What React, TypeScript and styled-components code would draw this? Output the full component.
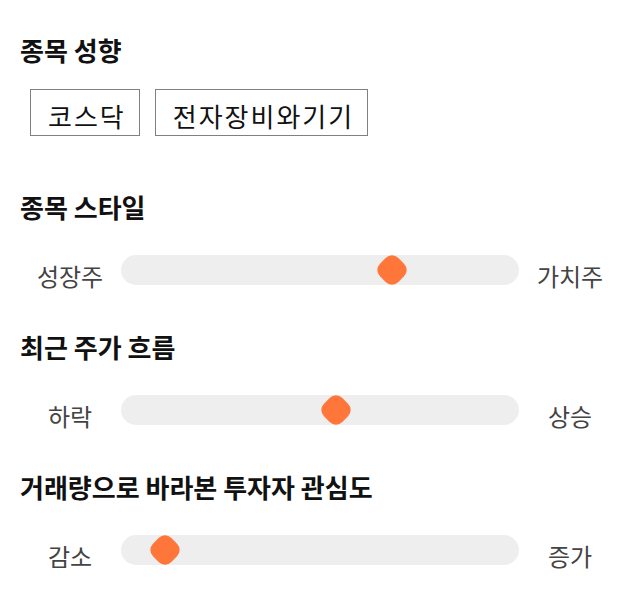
import React, { FC } from "react";
import styled, { createGlobalStyle } from "styled-components";

const GlobalStyle = createGlobalStyle`
  body {
    margin: 0;
    background: #ffffff;
    font-family: "Noto Sans CJK KR", "Noto Sans", sans-serif;
  }
`;

const Page = styled.div`
  width: 640px;
  padding: 35px 20px 0;
  box-sizing: border-box;
`;

const Heading = styled.h2`
  margin: 0;
  font-size: 26px;
  line-height: 30px;
  font-weight: 700;
  color: #111111;
`;

const ChipRow = styled.div`
  display: flex;
  gap: 15px;
  margin: 24px 0 0 10px;
`;

const Chip = styled.div`
  box-sizing: border-box;
  height: 47px;
  padding: 6px 13px 0 17px;
  display: flex;
  align-items: center;
  border: 1px solid #808080;
  font-size: 26px;
  letter-spacing: 2px;
  color: #111111;
`;

const Section = styled.section<{ $gap: number }>`
  margin-top: ${(p) => p.$gap}px;
`;

const SliderRow = styled.div`
  display: flex;
  align-items: flex-start;
  margin-top: 33px;
`;

const EndLabel = styled.span`
  width: 100px;
  flex: none;
  padding-top: 6px;
  text-align: center;
  font-size: 24px;
  line-height: 30px;
  color: #444444;
`;

const Track = styled.div`
  position: relative;
  flex: 1;
  height: 30px;
  margin: 0 1px;
  border-radius: 15px;
  background: #eeeeee;
`;

const Thumb = styled.div`
  position: absolute;
  top: 50%;
  width: 26px;
  height: 26px;
  border-radius: 9px;
  background: #ff763b;
  transform: translate(-50%, -50%) rotate(45deg);
`;

type SliderProps = {
  title: string;
  low: string;
  high: string;
  value: number;
};

const StyleSlider: FC<SliderProps> = ({ title, low, high, value }) => (
  <Section $gap={41}>
    <Heading>{title}</Heading>
    <SliderRow>
      <EndLabel>{low}</EndLabel>
      <Track>
        <Thumb style={{ left: `${value}%` }} />
      </Track>
      <EndLabel>{high}</EndLabel>
    </SliderRow>
  </Section>
);

const sliders: SliderProps[] = [
  { title: "종목 스타일", low: "성장주", high: "가치주", value: 68 },
  { title: "최근 주가 흐름", low: "하락", high: "상승", value: 54 },
  { title: "거래량으로 바라본 투자자 관심도", low: "감소", high: "증가", value: 11 },
];

const App: FC = () => (
  <>
    <GlobalStyle />
    <Page>
      <Heading>종목 성향</Heading>
      <ChipRow>
        <Chip>코스닥</Chip>
        <Chip>전자장비와기기</Chip>
      </ChipRow>
      <div style={{ height: 15 }} />
      {sliders.map((s) => (
        <StyleSlider key={s.title} {...s} />
      ))}
    </Page>
  </>
);

export default App;
